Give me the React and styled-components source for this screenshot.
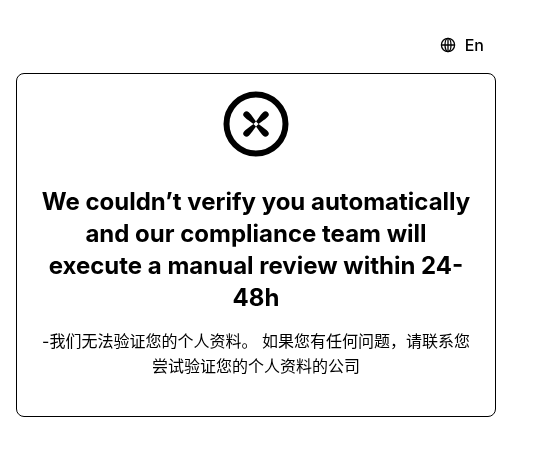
import styled, { createGlobalStyle } from "styled-components";

const GlobalStyle = createGlobalStyle`
  html, body {
    margin: 0;
    background: #fff;
  }
  body {
    font-family: Inter, "Noto Sans CJK SC", sans-serif;
    color: #000;
  }
`;

const Page = styled.div`
  width: 556px;
  height: 449px;
  padding: 36px 60px 0 16px;
  box-sizing: border-box;
  display: flex;
  flex-direction: column;
  filter: grayscale(1) brightness(0.75) contrast(100);
`;

const Header = styled.div`
  display: flex;
  justify-content: flex-end;
  height: 37px;
  padding-right: 12px;
`;

const LangButton = styled.div`
  display: flex;
  align-items: center;
  gap: 9px;
  height: 18px;
  font-size: 16px;
  font-weight: 500;
`;

const Card = styled.div`
  width: 480px;
  height: 344px;
  box-sizing: border-box;
  border: 1px solid #000;
  border-radius: 8px;
  padding: 17px 24px 0;
  display: flex;
  flex-direction: column;
  align-items: center;
`;

const Title = styled.h1`
  margin: 29px 0 0;
  font-size: 24px;
  line-height: 32px;
  font-weight: 700;
  text-align: center;
`;

const Message = styled.p`
  margin: 15px 0 0;
  font-size: 16px;
  line-height: 25px;
  text-align: center;
`;

const GlobeIcon = () => (
  <svg width="16" height="16" viewBox="0 0 16 16" fill="none" stroke="#000" strokeWidth="1.3">
    <circle cx="8" cy="8" r="6.6" />
    <ellipse cx="8" cy="8" rx="3" ry="6.6" />
    <path d="M1.4 8h13.2M8 1.4v13.2" />
  </svg>
);

const petal = "M31.2 31.2L30.6 27.5C30 24 29.8 22 29.8 19.6A3.2 3.2 0 0 1 36.2 19.6C36.2 22 36 24 35.4 27.5L34.8 31.2Z";

const FailIcon = () => (
  <svg width="66" height="66" viewBox="0 0 66 66" fill="none">
    <circle cx="33" cy="33" r="29.5" stroke="#000" strokeWidth="6" />
    <g fill="#000">
      <path d={petal} transform="rotate(45 33 33)" />
      <path d={petal} transform="rotate(135 33 33)" />
      <path d={petal} transform="rotate(225 33 33)" />
      <path d={petal} transform="rotate(315 33 33)" />
    </g>
  </svg>
);

const App = () => (
  <>
    <GlobalStyle />
    <Page>
      <Header>
        <LangButton>
          <GlobeIcon />
          En
        </LangButton>
      </Header>
      <Card>
        <FailIcon />
        <Title>
          We couldn’t verify you automatically and our compliance team will execute a manual review within 24-48h
        </Title>
        <Message>
          -我们无法验证您的个人资料。 如果您有任何问题，请联系您尝试验证您的个人资料的公司
        </Message>
      </Card>
    </Page>
  </>
);

export default App;
